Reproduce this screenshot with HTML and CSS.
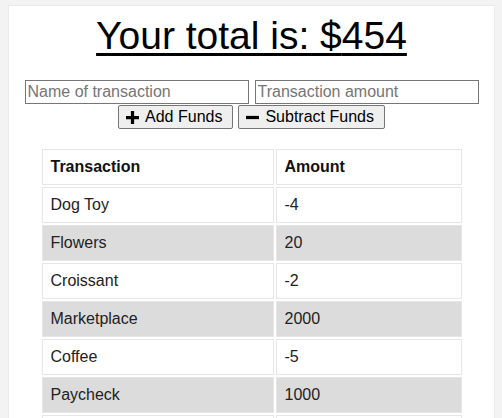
FILE: index.html
```html
<!DOCTYPE html>
<html>
<head>
<meta charset="utf-8">
<link rel="stylesheet" href="styles.css">
</head>
<body>
<div class="page">
  <h1 class="total">Your total is: $<span>454</span></h1>
  <form class="form">
    <div class="inputs">
      <input type="text" placeholder="Name of transaction">
      <input type="number" placeholder="Transaction amount">
    </div>
    <div class="buttons">
      <button type="button"><svg viewBox="0 0 12 12" width="13" height="13"><path d="M4.5 0h3v4.5H12v3H7.5V12h-3V7.5H0v-3h4.5z" fill="#000"/></svg>Add Funds</button>
      <button type="button"><svg viewBox="0 0 12 12" width="13" height="13"><path d="M0 4.5h12v3H0z" fill="#000"/></svg>Subtract Funds</button>
    </div>
  </form>
  <table class="tx">
    <thead>
      <tr><th class="c1">Transaction</th><th>Amount</th></tr>
    </thead>
    <tbody>
      <tr><td>Dog Toy</td><td>-4</td></tr>
      <tr><td>Flowers</td><td>20</td></tr>
      <tr><td>Croissant</td><td>-2</td></tr>
      <tr><td>Marketplace</td><td>2000</td></tr>
      <tr><td>Coffee</td><td>-5</td></tr>
      <tr><td>Paycheck</td><td>1000</td></tr>
      <tr><td></td><td></td></tr>
    </tbody>
  </table>
</div>
</body>
</html>
```
FILE: styles.css
```css
html, body {
  margin: 0;
  padding: 0;
  background: #f3f3f3;
  font-family: "Liberation Sans", Arial, sans-serif;
}
.page {
  background: #fff;
  margin: 5px 7px 0 8px;
  border: 1px solid #e9e9e9;
  padding-bottom: 40px;
  min-height: 500px;
}
.total {
  margin: 8px 0 0;
  text-align: center;
  font-size: 39px;
  font-weight: normal;
  line-height: 44px;
  text-decoration: underline;
  text-decoration-thickness: 3px;
  text-underline-offset: 4px;
}
.form {
  margin-top: 22px;
  display: flex;
  flex-direction: column;
  align-items: center;
}
.inputs {
  display: flex;
  gap: 6px;
}
.inputs input {
  width: 224px;
  height: 24px;
  box-sizing: border-box;
  border: 1px solid #767676;
  border-radius: 0;
  padding: 1px 2px;
  font: 16px "Liberation Sans", Arial, sans-serif;
  margin: 0;
}
.inputs input::placeholder { color: #757575; }
.buttons {
  display: flex;
  gap: 5px;
  margin-top: 1px;
}
.buttons button {
  height: 24px;
  box-sizing: border-box;
  background: #efefef;
  border: 1px solid #767676;
  border-radius: 2px;
  padding: 0 10px 0 7px;
  font: 16px "Liberation Sans", Arial, sans-serif;
  color: #000;
  display: flex;
  align-items: center;
  gap: 6px;
}
.tx {
  margin: 18px auto 0;
  width: 424px;
  border-collapse: separate;
  border-spacing: 2px;
  font-size: 16px;
}
.tx th, .tx td {
  border: 1px solid #e6e6e6;
  height: 36px;
  box-sizing: border-box;
  padding: 0 8px;
  text-align: left;
  color: #222;
}
.tx th { font-weight: bold; color: #111; }
.tx .c1 { width: 232px; }
.tx tbody tr:nth-child(even) td { background: #dcdcdc; }
```
